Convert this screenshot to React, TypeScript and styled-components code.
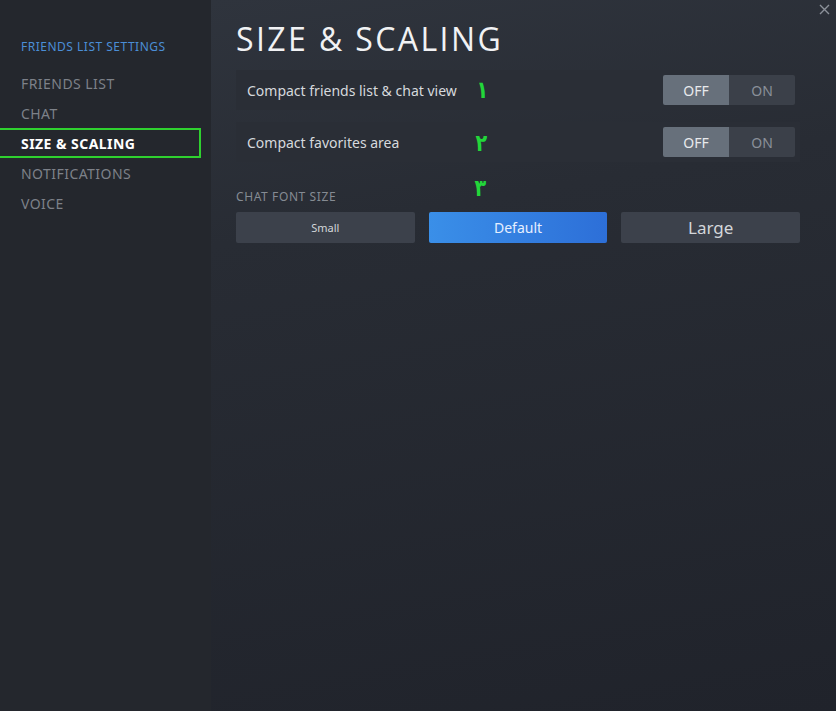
import * as React from "react"
import styled, { createGlobalStyle } from "styled-components"

const GlobalStyle = createGlobalStyle`
  html, body {
    margin: 0;
    padding: 0;
    background: #23262d;
    font-family: "Noto Sans", "Open Sans", Arial, sans-serif;
  }
`

const Window = styled.div`
  display: flex;
  width: 836px;
  height: 711px;
  overflow: hidden;
  position: relative;
`

const Sidebar = styled.nav`
  width: 211px;
  flex-shrink: 0;
  background: #24272d;
  padding-top: 38px;
  box-sizing: border-box;
`

const SidebarTitle = styled.div`
  font-size: 12px;
  color: #4b8ed6;
  padding-left: 21px;
  margin-bottom: 13px;
  letter-spacing: 0.5px;
`

const NavItem = styled.div<{ $active?: boolean }>`
  height: 30px;
  width: 201px;
  box-sizing: border-box;
  display: flex;
  align-items: center;
  padding-left: 21px;
  font-size: 14px;
  letter-spacing: 0.45px;
  color: ${({ $active }) => ($active ? "#ffffff" : "#7d8189")};
  font-weight: ${({ $active }) => ($active ? 700 : 400)};
  border: 2px solid ${({ $active }) => ($active ? "#2fd12f" : "transparent")};
  border-left: none;
`

const Main = styled.main`
  flex: 1;
  background: linear-gradient(170deg, #2f343d 0%, #282c34 30%, #20232b 100%);
  padding: 20px 36px 0 25px;
  box-sizing: border-box;
`

const Title = styled.h1`
  margin: 0 0 12px;
  font-family: "Open Sans", sans-serif;
  font-weight: 400;
  font-size: 32px;
  letter-spacing: 2.4px;
  color: #f1f2f4;
  line-height: 38px;
`

const Row = styled.div`
  height: 40px;
  background: #2a2e36;
  display: flex;
  align-items: center;
  padding: 0 5px 0 11px;
  margin-bottom: 12px;
  position: relative;
`

const RowLabel = styled.div`
  flex: 1;
  font-size: 14px;
  color: #d6d9dd;
`

const Toggle = styled.div`
  display: flex;
  height: 30px;
`

const ToggleHalf = styled.div<{ $on?: boolean }>`
  width: 66px;
  display: flex;
  align-items: center;
  justify-content: center;
  font-size: 14px;
  color: ${({ $on }) => ($on ? "#e8eaed" : "#8a9099")};
  background: ${({ $on }) => ($on ? "#67707b" : "#3b4049")};
  border-radius: ${({ $on }) => ($on ? "2px 0 0 2px" : "0 2px 2px 0")};
`

const Marker = styled.span`
  position: absolute;
  color: #22d63a;
  font-family: "DejaVu Sans", sans-serif;
  font-weight: 700;
  font-size: 24px;
  line-height: 1;
  transform: scaleX(0.8);
`

const SectionLabel = styled.div`
  font-size: 12px;
  color: #858b93;
  letter-spacing: 0.6px;
  margin-top: 26px;
  margin-bottom: 7px;
  position: relative;
`

const SizeRow = styled.div`
  display: flex;
  gap: 14px;
`

const SizeButton = styled.div<{ $active?: boolean; $size: number }>`
  flex: 1;
  height: 31px;
  display: flex;
  align-items: center;
  justify-content: center;
  font-size: ${({ $size }) => $size}px;
  color: ${({ $active }) => ($active ? "#e6efff" : "#d3d6da")};
  background: ${({ $active }) =>
    $active ? "linear-gradient(90deg, #3a8fe8 0%, #2d6fd8 100%)" : "#3c414b"};
  border-radius: 2px;
`

const Close = styled.div`
  position: absolute;
  top: 2px;
  right: 5px;
  width: 14px;
  height: 14px;
  display: flex;
  align-items: center;
  justify-content: center;
`

export default function App() {
  const navItems = ["FRIENDS LIST", "CHAT", "SIZE & SCALING", "NOTIFICATIONS", "VOICE"]
  return (
    <>
      <GlobalStyle />
      <Window>
        <Sidebar>
          <SidebarTitle>FRIENDS LIST SETTINGS</SidebarTitle>
          {navItems.map((item) => (
            <NavItem key={item} $active={item === "SIZE & SCALING"}>
              {item}
            </NavItem>
          ))}
        </Sidebar>
        <Main>
          <Title>SIZE &amp; SCALING</Title>
          <Row>
            <RowLabel>Compact friends list &amp; chat view</RowLabel>
            <Marker style={{ left: 239, top: 8 }}>۱</Marker>
            <Toggle>
              <ToggleHalf $on>OFF</ToggleHalf>
              <ToggleHalf>ON</ToggleHalf>
            </Toggle>
          </Row>
          <Row>
            <RowLabel>Compact favorites area</RowLabel>
            <Marker style={{ left: 238, top: 9 }}>۲</Marker>
            <Toggle>
              <ToggleHalf $on>OFF</ToggleHalf>
              <ToggleHalf>ON</ToggleHalf>
            </Toggle>
          </Row>
          <SectionLabel>
            CHAT FONT SIZE
            <Marker style={{ left: 237, top: -12 }}>۳</Marker>
          </SectionLabel>
          <SizeRow>
            <SizeButton $size={11}>Small</SizeButton>
            <SizeButton $size={14} $active>
              Default
            </SizeButton>
            <SizeButton $size={17}>Large</SizeButton>
          </SizeRow>
        </Main>
        <Close>
          <svg width="11" height="11" viewBox="0 0 11 11">
            <path d="M1 1L10 10M10 1L1 10" stroke="#8c919a" strokeWidth="1.4" />
          </svg>
        </Close>
      </Window>
    </>
  )
}
